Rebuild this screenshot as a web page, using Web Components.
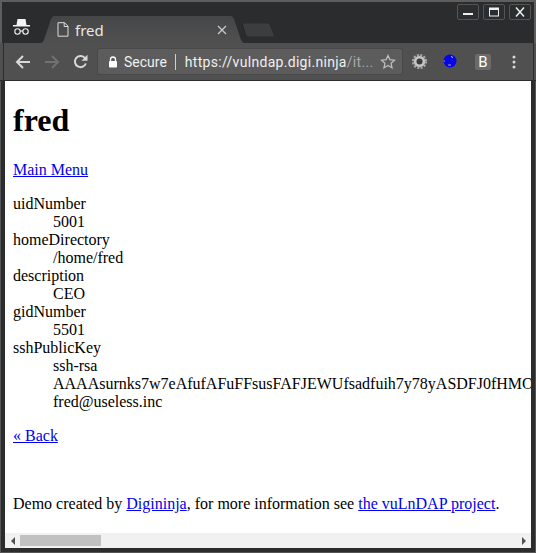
<!DOCTYPE html>
<html>
<head>
<meta charset="utf-8">
<title>fred</title>
<style>
  html, body { margin: 0; padding: 0; height: 100%; background: #2a2c2e; overflow: hidden; }
</style>
</head>
<body>
<browser-window>
  <tab-strip slot="strip" title-text="fred"></tab-strip>
  <nav-bar slot="nav" secure-label="Secure" host-text="https://vulndap.digi.ninja" path-text="/it..."></nav-bar>
  <ldap-page>
    <h1>fred</h1>
    <p><a href="#">Main Menu</a></p>
    <dl>
      <dt>uidNumber</dt><dd>5001</dd>
      <dt>homeDirectory</dt><dd>/home/fred</dd>
      <dt>description</dt><dd>CEO</dd>
      <dt>gidNumber</dt><dd>5501</dd>
      <dt>sshPublicKey</dt>
      <dd>ssh-rsa<br>AAAAsurnks7w7eAfufAFuFFsusFAFJEWUfsadfuih7y78yASDFJ0fHMO<br>fred@useless.inc</dd>
    </dl>
    <p><a href="#">« Back</a></p>
    <p><br></p>
    <p>Demo created by <a href="#">Digininja</a>, for more information see <a href="#">the vuLnDAP project</a>.</p>
  </ldap-page>
  <h-scrollbar slot="scroll"></h-scrollbar>
</browser-window>

<script>
const windowTemplate = document.createElement('template');
windowTemplate.innerHTML = `
  <style>
    :host { display: flex; flex-direction: column; width: 536px; height: 553px; box-sizing: border-box; padding: 0 5px 5px; background: #2a2c2e; box-shadow: inset 1px 0 #555, inset -1px 0 #555, inset 0 -1px #555; overflow: hidden; }
    .top { margin: 0 -5px; }
    .view { flex: 1; min-height: 0; overflow: hidden; background: #fff; }
  </style>
  <div class="top"><slot name="strip"></slot><slot name="nav"></slot></div>
  <div class="view"><slot></slot></div>
  <slot name="scroll"></slot>
`;
class BrowserWindow extends HTMLElement {
  constructor() {
    super();
    this.attachShadow({mode: 'open'}).appendChild(windowTemplate.content.cloneNode(true));
  }
}
customElements.define('browser-window', BrowserWindow);

const stripTemplate = document.createElement('template');
stripTemplate.innerHTML = `
  <style>
    :host { display: flex; height: 43px; padding: 0 5px; box-sizing: border-box; align-items: flex-end; color: #fff; font-family: "Noto Sans", Roboto, sans-serif; border-top: 2px solid #5e5e5e; background: #2a2c2e; box-shadow: inset 2px 0 #5e5e5e, inset -2px 0 #5e5e5e; isolation: isolate; }
    .incognito { width: 35px; height: 27px; display: flex; align-items: center; flex: none; }
    .tab { position: relative; width: 204px; height: 27px; margin-right: -2px; display: flex; align-items: center; flex: none; box-sizing: border-box; padding: 0 14px 0 16px; font-size: 15px; }
    .tab > svg.bg { position: absolute; inset: 0; z-index: -1; }
    .tab span { flex: 1; margin-left: 6px; color: #e8e8e8; }
    .ghost { margin-bottom: 6px; flex: none; }
    .space { flex: 1; }
    .controls { display: flex; gap: 4px; align-self: flex-start; margin: 2px 0 0 0; }
    .controls div { width: 22px; height: 16px; box-sizing: border-box; border: 1px solid #555; border-radius: 2px; display: flex; align-items: center; justify-content: center; background: #2b2e30; }
  </style>
  <div class="incognito">
    <svg width="17" height="16" viewBox="0 0 17 16" style="margin:-5px 0 0 8px"><path d="M4.500 0h8l1 6h-10z" fill="#f4f4f4"/><rect x="0" y="6" width="17" height="1.500" fill="#f4f4f4"/><g fill="none" stroke="#f4f4f4" stroke-width="1.100"><circle cx="4.500" cy="12.500" r="2.700"/><circle cx="12.500" cy="12.500" r="2.700"/><path d="M7 12h3"/></g></svg>
  </div>
  <div class="tab">
    <svg class="bg" width="204" height="27" viewBox="0 0 204 27"><defs><linearGradient id="t" x1="0" y1="0" x2="0" y2="1"><stop offset="0" stop-color="#454647"/><stop offset="1" stop-color="#505050"/></linearGradient></defs><path d="M0 27C2 27 3 26 4 24L11 3C12 1 13 0 15 0H190C192 0 193 1 194 3L201 24C202 26 203 27 204 27z" fill="url(#t)"/></svg>
    <svg width="12" height="15" viewBox="0 0 12 15" style="margin-left:1px"><path d="M1 .7h6.500L11 4.200v10H1zM7.200 .7v3.800H11" fill="none" stroke="#dcdcdc" stroke-width="1"/></svg>
    <span></span>
    <svg width="10" height="10" viewBox="0 0 10 10" style="margin-right:3px"><path d="M1 1l8 8M9 1l-8 8" stroke="#c9c9c9" stroke-width="1.300"/></svg>
  </div>
  <svg class="ghost" width="33" height="14" viewBox="0 0 33 14"><path d="M0 0H26C27 0 27.500 .5 28 1.500L33 14H6C5 14 4.500 13.500 4 12.500z" fill="#3b3d3f" stroke="#222" stroke-width=".6"/></svg>
  <div class="space"></div>
  <div class="controls">
    <div><svg width="12" height="10" viewBox="0 0 12 10"><rect x="1" y="6" width="10" height="2" fill="#eee"/></svg></div>
    <div><svg width="12" height="10" viewBox="0 0 12 10"><rect x="1.500" y="1" width="9" height="8" fill="none" stroke="#eee" stroke-width="1"/><rect x="1" y="1" width="10" height="2" fill="#eee"/></svg></div>
    <div><svg width="12" height="10" viewBox="0 0 12 10"><path d="M2 .5l8 9M10 .5l-8 9" stroke="#eee" stroke-width="1.500"/></svg></div>
  </div>
`;
class TabStrip extends HTMLElement {
  constructor() {
    super();
    this.attachShadow({mode: 'open'}).appendChild(stripTemplate.content.cloneNode(true));
  }
  connectedCallback() {
    this.shadowRoot.querySelector('span').textContent = this.getAttribute('title-text');
  }
}
customElements.define('tab-strip', TabStrip);

const navTemplate = document.createElement('template');
navTemplate.innerHTML = `
  <style>
    :host { display: flex; align-items: center; height: 38px; box-sizing: border-box; padding: 0 5px 0 8px; background: #505050; border-bottom: 1px solid #2a2c2e; box-shadow: inset 3px 0 #505050, inset 4px 0 #2a2c2e, inset -2px 0 #505050, inset -3px 0 #2a2c2e; font-family: Roboto, "Noto Sans", sans-serif; font-size: 14px; }
    .btn { width: 29px; display: flex; justify-content: center; flex: none; }
    .omni { flex: none; width: 306px; height: 27px; margin-left: 2px; box-sizing: border-box; display: flex; align-items: center; padding: 0 6px 0 10px; background: #5c5c5c; border-radius: 3px; border: 1px solid #484848; color: #f0f0f0; white-space: nowrap; overflow: hidden; }
    .secure { margin-left: 6px; }
    .sep { width: 1px; height: 16px; background: #d0d0d0; margin: 0 9px 0 8px; flex: none; }
    .url { flex: 1; overflow: hidden; letter-spacing: .3px; }
    .url i { font-style: normal; color: #a8a8a8; }
    .ext { display: flex; align-items: center; flex: none; margin-left: 8px; }
    .bbox { width: 16px; height: 16px; background: #6b6b6b; border-radius: 2px; color: #fff; font-size: 15px; line-height: 16px; text-align: center; margin: 0 21px 0 17px; }
  </style>
  <div class="btn"><svg width="16" height="14" viewBox="0 0 16 14"><path d="M15 7H2M8 1L2 7l6 6" fill="none" stroke="#d8d8d8" stroke-width="2"/></svg></div>
  <div class="btn"><svg width="16" height="14" viewBox="0 0 16 14"><path d="M1 7h13M8 1l6 6-6 6" fill="none" stroke="#727272" stroke-width="2"/></svg></div>
  <div class="btn"><svg width="15" height="15" viewBox="0 0 15 15"><path d="M12.800 9.500A5.600 5.600 0 1 1 11.500 3.600L13 5" fill="none" stroke="#d8d8d8" stroke-width="2"/><path d="M14.500 .8v6H8.500z" fill="#d8d8d8"/></svg></div>
  <div class="omni">
    <svg width="10" height="12" viewBox="0 0 10 12"><path d="M2.500 5V3.500a2.500 2.500 0 0 1 5 0V5" fill="none" stroke="#fff" stroke-width="1.300"/><rect x="1" y="5" width="8" height="6.500" rx=".8" fill="#fff"/></svg>
    <span class="secure"></span><div class="sep"></div>
    <div class="url"><span class="h"></span><i class="p"></i></div>
    <svg width="16" height="15" viewBox="0 0 16 15"><path d="M8 1.500l1.900 4.200 4.600.5-3.400 3.100.9 4.500L8 11.500l-4 2.300.9-4.500L1.500 6.200l4.600-.5z" fill="none" stroke="#bdbdbd" stroke-width="1.300"/></svg>
  </div>
  <div class="ext">
    <svg width="17" height="17" viewBox="0 0 17 17"><circle cx="8.500" cy="8.500" r="5.800" fill="#c4c4c4"/><circle cx="8.500" cy="8.500" r="6.500" fill="none" stroke="#a8a8a8" stroke-width="2.200" stroke-dasharray="2 1.400"/><circle cx="8.500" cy="8.500" r="3" fill="#3c3c3c"/></svg>
    <svg style="margin:-2px 0 0 14px" width="16" height="16" viewBox="0 0 16 16"><circle cx="8" cy="8" r="6.500" fill="#0505e8"/><path d="M6 12h3" stroke="#aab" stroke-width="1"/><path d="M9.500 3l1 2" stroke="#ccd" stroke-width="1"/><path d="M1.500 8h1.500" stroke="#99c" stroke-width="1"/></svg>
    <div class="bbox">B</div>
    <svg width="4" height="14" viewBox="0 0 4 14"><circle cx="2" cy="2" r="1.500" fill="#d8d8d8"/><circle cx="2" cy="7" r="1.500" fill="#d8d8d8"/><circle cx="2" cy="12" r="1.500" fill="#d8d8d8"/></svg>
  </div>
`;
class NavBar extends HTMLElement {
  constructor() {
    super();
    this.attachShadow({mode: 'open'}).appendChild(navTemplate.content.cloneNode(true));
  }
  connectedCallback() {
    const root = this.shadowRoot;
    root.querySelector('.secure').textContent = this.getAttribute('secure-label');
    root.querySelector('.h').textContent = this.getAttribute('host-text');
    root.querySelector('.p').textContent = this.getAttribute('path-text');
  }
}
customElements.define('nav-bar', NavBar);

const pageTemplate = document.createElement('template');
pageTemplate.innerHTML = `
  <style>
    :host { display: flow-root; padding: 0 8px; font-family: "Liberation Serif", serif; font-size: 16px; line-height: 18px; color: #000; white-space: nowrap; }
    ::slotted(h1) { font-size: 32px; line-height: 37px; margin: 21.44px 0; }
    ::slotted(p) { margin: 16px 0; }
    ::slotted(dl) { margin: 16px 0; }
  </style>
  <slot></slot>
`;
class LdapPage extends HTMLElement {
  constructor() {
    super();
    this.attachShadow({mode: 'open'}).appendChild(pageTemplate.content.cloneNode(true));
  }
}
customElements.define('ldap-page', LdapPage);

const scrollTemplate = document.createElement('template');
scrollTemplate.innerHTML = `
  <style>
    :host { display: flex; align-items: center; height: 15px; flex: none; background: #f1f1f1; }
    .arrow { width: 15px; display: flex; justify-content: center; flex: none; }
    .track { flex: 1; height: 100%; display: flex; align-items: center; }
    .thumb { width: 81px; height: 11px; background: #c1c1c1; }
  </style>
  <div class="arrow"><svg width="6" height="8" viewBox="0 0 6 8"><path d="M5 0v8L1 4z" fill="#505050"/></svg></div>
  <div class="track"><div class="thumb"></div></div>
  <div class="arrow"><svg width="6" height="8" viewBox="0 0 6 8"><path d="M1 0v8l4-4z" fill="#505050"/></svg></div>
`;
class HScrollbar extends HTMLElement {
  constructor() {
    super();
    this.attachShadow({mode: 'open'}).appendChild(scrollTemplate.content.cloneNode(true));
  }
}
customElements.define('h-scrollbar', HScrollbar);
</script>
</body>
</html>
